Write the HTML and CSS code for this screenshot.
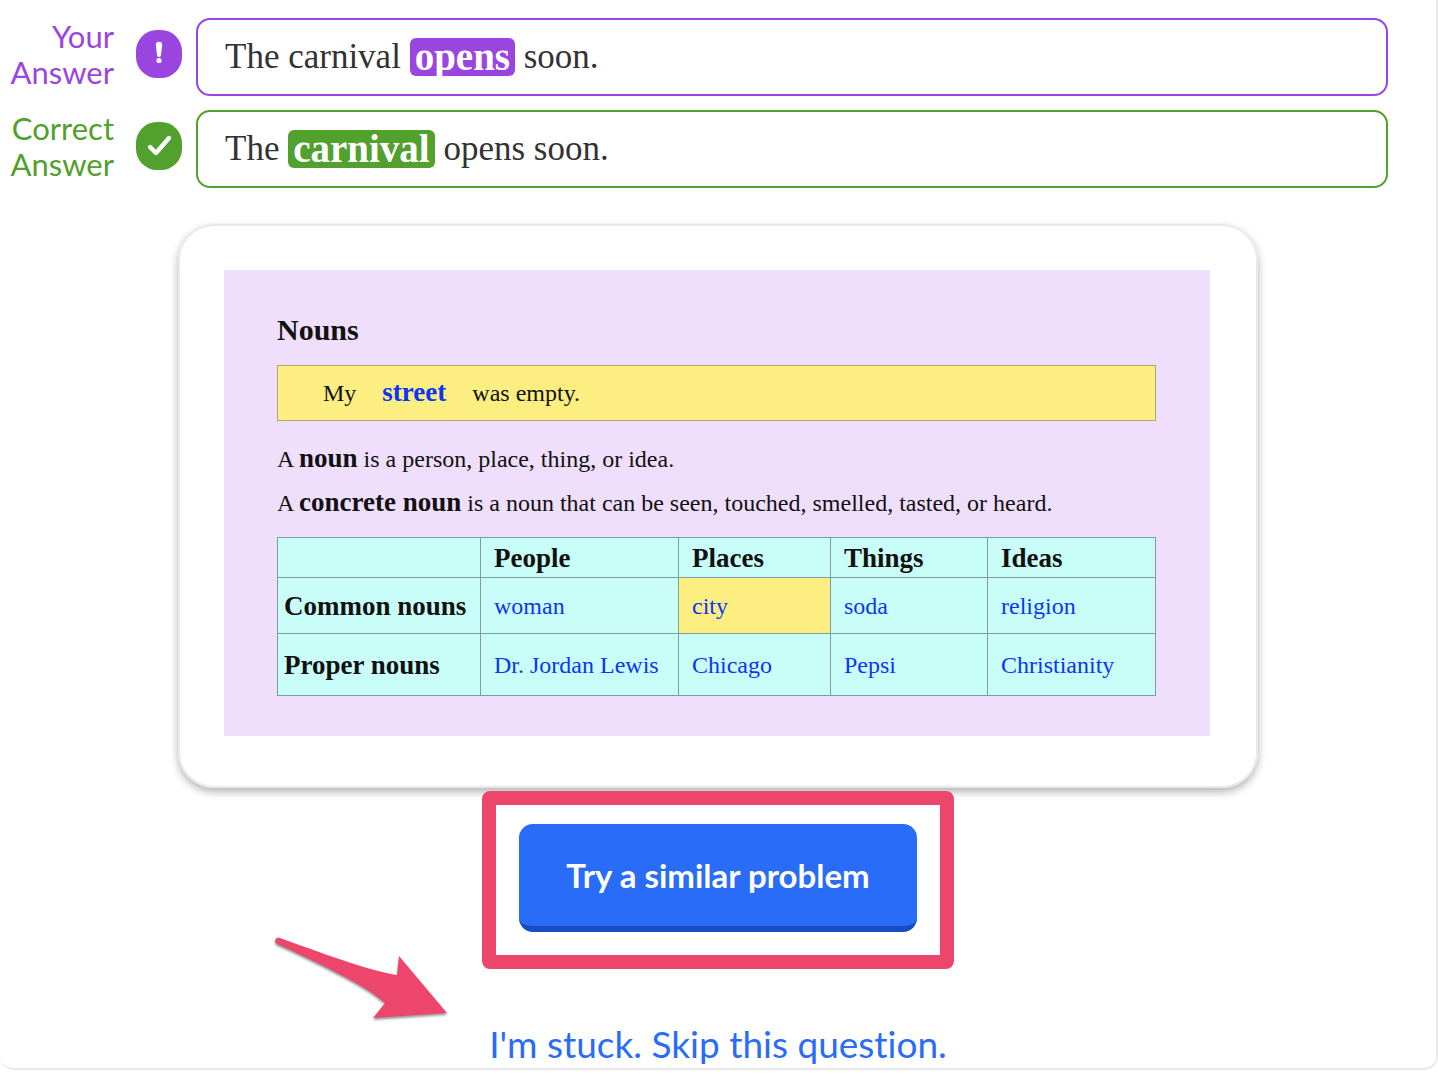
FILE: index.html
```html
<!DOCTYPE html>
<html lang="en">
<head>
    <meta charset="UTF-8">
    <meta name="viewport" content="width=device-width, initial-scale=1.0">
    <title>Nouns</title>
    <link rel="stylesheet" href="styles.css">
</head>
<body>
    <main class="panel">
        <section class="answers">
            <div class="answer answer-yours">
                <div class="answer-label">Your<br>Answer</div>
                <svg class="answer-icon" viewBox="0 0 46 48" aria-hidden="true">
                    <rect width="46" height="48" rx="21" fill="currentColor"/>
                    <path d="M19.800 15a3.200 3.200 0 0 1 6.400 0l-1.200 10a2 2 0 0 1-4 0z" fill="#fff"/>
                    <circle cx="23" cy="30.500" r="2.600" fill="#fff"/>
                </svg>
                <p class="answer-box">The carnival <mark>opens</mark> soon.</p>
            </div>
            <div class="answer answer-correct">
                <div class="answer-label">Correct<br>Answer</div>
                <svg class="answer-icon" viewBox="0 0 46 48" aria-hidden="true">
                    <rect width="46" height="48" rx="21" fill="currentColor"/>
                    <path d="M14 25l6 6L33 16" fill="none" stroke="#fff" stroke-width="4.400" stroke-linecap="round" stroke-linejoin="round"/>
                </svg>
                <p class="answer-box">The <mark>carnival</mark> opens soon.</p>
            </div>
        </section>

        <section class="card">
            <div class="lesson">
                <h2>Nouns</h2>
                <p class="example"><span>My</span><b>street</b><span>was empty.</span></p>
                <p>A <b>noun</b> is a person, place, thing, or idea.</p>
                <p>A <b>concrete noun</b> is a noun that can be seen, touched, smelled, tasted, or heard.</p>
                <table>
                    <thead>
                        <tr>
                            <td class="col-name"></td>
                            <th class="col-people" scope="col">People</th>
                            <th class="col-places" scope="col">Places</th>
                            <th class="col-things" scope="col">Things</th>
                            <th class="col-ideas" scope="col">Ideas</th>
                        </tr>
                    </thead>
                    <tbody>
                        <tr class="common">
                            <th scope="row">Common nouns</th>
                            <td>woman</td>
                            <td class="current">city</td>
                            <td>soda</td>
                            <td>religion</td>
                        </tr>
                        <tr class="proper">
                            <th scope="row">Proper nouns</th>
                            <td>Dr. Jordan Lewis</td>
                            <td>Chicago</td>
                            <td>Pepsi</td>
                            <td>Christianity</td>
                        </tr>
                    </tbody>
                </table>
            </div>
        </section>

        <section class="actions">
            <div class="frame">
                <button type="button" class="try-btn">Try a similar problem</button>
            </div>
            <a href="#" class="skip-link">I'm stuck. Skip this question.</a>
            <svg class="arrow" viewBox="0 0 180 100" aria-hidden="true">
                <path d="M10 8C46 21 103 42 127 45L129 26 177 83 103 88 115 73C94 54 42 30 7 14A3 3 0 0 1 10 8z" fill="#ed466d"/>
            </svg>
        </section>
    </main>
</body>
</html>
```
FILE: styles.css
```css
* {
    box-sizing: border-box;
    margin: 0;
    padding: 0;
}

body {
    font-family: Lato, sans-serif;
    font-variant-ligatures: none;
    background-color: #fff;
}

.panel {
    padding-top: 18px;
    border: 2px solid #e9e9e9;
    border-top: none;
    border-left: none;
    border-radius: 0 0 14px 14px;
}

.answers {
    display: flex;
    flex-direction: column;
    gap: 14px;
    padding-right: 48px;
}

.answer {
    display: flex;
    align-items: flex-start;
}

.answer-yours {
    color: #9b45e0;
}

.answer-correct {
    color: #52a02d;
}

.answer-label {
    width: 114px;
    font-size: 31px;
    line-height: 36px;
    text-align: right;
}

.answer-icon {
    flex: none;
    width: 46px;
    height: 48px;
    margin: 12px 14px 0 22px;
}

.answer-box {
    flex: 1;
    padding: 18px 27px;
    border: 2px solid currentColor;
    border-radius: 14px;
    font-family: "Liberation Serif", serif;
    font-size: 35px;
    line-height: 38px;
}

.answer-box::first-line {
    color: #333;
}

.answer-box mark {
    display: inline-block;
    padding: 0 5px;
    border-radius: 6px;
    color: #fff;
    font-size: 39px;
    font-weight: bold;
    vertical-align: top;
}

.answer-yours mark {
    background-color: #9b45e0;
}

.answer-correct mark {
    background-color: #52a02d;
}

.card {
    width: 1080px;
    max-width: 100%;
    margin: 36px auto 0;
    padding: 44px 46px 50px 44px;
    border: 2px solid #e9e9e9;
    border-radius: 36px;
    box-shadow: 0 4px 8px rgba(0, 0, 0, 0.3);
}

.lesson {
    padding: 44px 54px 40px 53px;
    background-color: #efdffc;
    color: #111;
    font-family: "Liberation Serif", serif;
    font-size: 24px;
    line-height: 32px;
}

.lesson h2 {
    margin-bottom: 19px;
    font-size: 30px;
}

.lesson b,
.lesson th {
    font-size: 27px;
    line-height: 30px;
}

.lesson p {
    margin-bottom: 12px;
}

.lesson .example {
    display: flex;
    align-items: baseline;
    gap: 26px;
    margin-bottom: 22px;
    padding: 11px 45px;
    border: 1px solid #b3a76c;
    background-color: #fcee80;
}

.lesson .example b,
.lesson td {
    color: #0c35f5;
}

.lesson table {
    width: 100%;
    margin-top: 18px;
    border-collapse: collapse;
    table-layout: fixed;
    background-color: #c9fdf8;
}

.lesson th,
.lesson td {
    height: 40px;
    padding-left: 13px;
    border: 1px solid #7f9d9b;
    text-align: left;
    white-space: nowrap;
}

.lesson tbody th {
    padding-left: 6px;
}

.lesson .common td {
    height: 56px;
}

.lesson .proper td {
    height: 62px;
}

.lesson .current {
    background-color: #fcee80;
}

.lesson .col-name {
    width: 203px;
}

.lesson .col-people {
    width: 198px;
}

.lesson .col-places {
    width: 152px;
}

.lesson .col-things {
    width: 157px;
}

.lesson .col-ideas {
    width: 168px;
}

.actions {
    position: relative;
    display: flex;
    flex-direction: column;
    align-items: center;
    margin-top: 3px;
}

.frame {
    padding: 19px 23px 23px;
    border: 14px solid #ed466d;
    border-radius: 8px;
    background-color: #fff;
}

.try-btn {
    display: block;
    width: 398px;
    height: 108px;
    border: none;
    border-bottom: 6px solid #164dbf;
    border-radius: 14px;
    background-color: #296cf8;
    color: #fff;
    font-family: inherit;
    font-size: 33px;
    font-weight: bold;
    cursor: pointer;
}

.skip-link {
    margin-top: 51px;
    color: #296cf8;
    font-size: 37px;
    line-height: 48px;
    text-decoration: none;
}

/* points at the skip link, left of the button */
.arrow {
    position: absolute;
    top: 139px;
    left: calc(50% - 448px);
    width: 180px;
    height: 100px;
    filter: drop-shadow(0 2px 1px rgba(0, 0, 0, 0.4));
}
```
